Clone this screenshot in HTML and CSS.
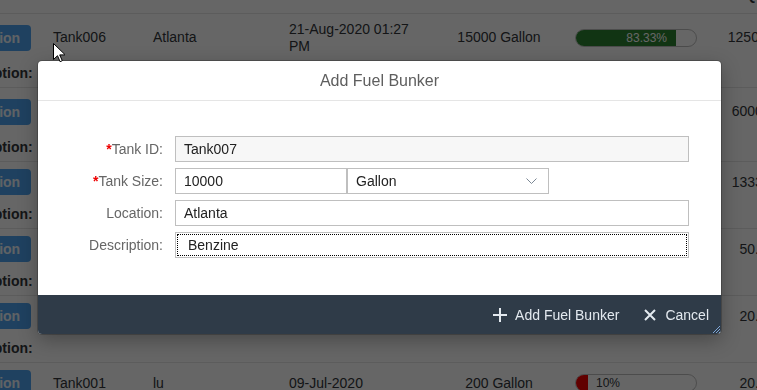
FILE: index.html
```html
<!DOCTYPE html>
<html lang="en">
<head>
<meta charset="UTF-8">
<title>Fuel Bunkers</title>
<link rel="stylesheet" href="styles.css">
</head>
<body>

<!-- tank list (behind the dialog) -->
<div class="table">
  <div class="thead">
    <div></div><div>Tank ID</div><div>Location</div><div>Created On</div>
    <div class="qty">Volume</div><div>Fill Level</div><div class="num">Qty</div>
  </div>

  <div class="trow">
    <div class="cells">
      <div><button class="act">Location</button></div>
      <div>Tank006</div>
      <div>Atlanta</div>
      <div>21-Aug-2020 01:27 PM</div>
      <div class="qty">15000 Gallon</div>
      <div class="prog"><div class="bar"><div class="fill ok" style="width:83.33%">83.33%</div></div></div>
      <div class="num">12500.00</div>
    </div>
    <div class="popin"><b>Description:</b></div>
  </div>

  <div class="trow">
    <div class="cells">
      <div><button class="act">Location</button></div>
      <div>Tank005</div>
      <div>Atlanta</div>
      <div>20-Aug-2020 11:05 AM</div>
      <div class="qty">8000 Gallon</div>
      <div class="prog"><div class="bar"><div class="fill ok" style="width:75%">75%</div></div></div>
      <div class="num">6000.00</div>
    </div>
    <div class="popin"><b>Description:</b></div>
  </div>

  <div class="trow">
    <div class="cells">
      <div><button class="act">Location</button></div>
      <div>Tank004</div>
      <div>Boston</div>
      <div>14-Jul-2020</div>
      <div class="qty">4000 Gallon</div>
      <div class="prog"><div class="bar"><div class="fill warn" style="width:33.33%"></div><span>33.33%</span></div></div>
      <div class="num">1333.33</div>
    </div>
    <div class="popin"><b>Description:</b></div>
  </div>

  <div class="trow">
    <div class="cells">
      <div><button class="act">Location</button></div>
      <div>Tank003</div>
      <div>Denver</div>
      <div>12-Jul-2020</div>
      <div class="qty">100 Gallon</div>
      <div class="prog"><div class="bar"><div class="fill ok" style="width:50%">50%</div></div></div>
      <div class="num">50.00</div>
    </div>
    <div class="popin"><b>Description:</b></div>
  </div>

  <div class="trow">
    <div class="cells">
      <div><button class="act">Location</button></div>
      <div>Tank002</div>
      <div>lu</div>
      <div>10-Jul-2020</div>
      <div class="qty">200 Gallon</div>
      <div class="prog"><div class="bar"><div class="fill bad" style="width:10%"></div><span>10%</span></div></div>
      <div class="num">20.00</div>
    </div>
    <div class="popin"><b>Description:</b></div>
  </div>

  <div class="trow">
    <div class="cells">
      <div><button class="act">Location</button></div>
      <div>Tank001</div>
      <div>lu</div>
      <div>09-Jul-2020</div>
      <div class="qty">200 Gallon</div>
      <div class="prog"><div class="bar"><div class="fill bad" style="width:10%"></div><span>10%</span></div></div>
      <div class="num">20.00</div>
    </div>
    <div class="popin"><b>Description:</b></div>
  </div>
</div>

<div class="overlay"></div>

<!-- Add Fuel Bunker dialog -->
<div class="dialog">
  <div class="dlg-head">Add Fuel Bunker</div>

  <form class="form">
    <label><span class="req">*</span>Tank ID:</label>
    <input class="inp ro" value="Tank007" readonly>

    <label><span class="req">*</span>Tank Size:</label>
    <div class="pair">
      <input class="inp size" value="10000">
      <div class="sel">
        <span>Gallon</span>
        <svg width="11" height="6" viewBox="0 0 11 6"><path d="M.5.5l5 5 5-5" fill="none" stroke="#7b8794" stroke-width="1"/></svg>
      </div>
    </div>

    <label>Location:</label>
    <input class="inp" value="Atlanta">

    <label>Description:</label>
    <input class="inp focus" value="Benzine">
  </form>

  <div class="dlg-foot">
    <button type="button" class="fbtn">
      <svg width="14" height="14" viewBox="0 0 14 14"><path d="M7 0v14M0 7h14" stroke="currentColor" stroke-width="2"/></svg>
      Add Fuel Bunker
    </button>
    <button type="button" class="fbtn x">
      <svg width="12" height="12" viewBox="0 0 12 12"><path d="M1 1l10 10M11 1L1 11" stroke="currentColor" stroke-width="2"/></svg>
      Cancel
    </button>
    <svg class="grip" width="8" height="8" viewBox="0 0 8 8"><path d="M8 1L1 8M8 4L4 8M8 7L7 8" stroke="#7fa6d6" stroke-width="1"/></svg>
  </div>
</div>

<svg class="cursor" width="12" height="20" viewBox="0 0 12 20"><path d="M.5.5v16l4-3.8 2.6 6 2.2-1-2.6-5.8h5.6z" fill="#fff" stroke="#000" stroke-width="1"/></svg>

</body>
</html>
```

FILE: styles.css
```css
html,body{margin:0;height:100%;overflow:hidden;}
body{font-family:"Liberation Sans",Arial,sans-serif;font-size:14px;color:#32363a;background:#fff;position:relative;}

/* table behind */
.table{margin:-30px 0 0 -61px;width:868px;}
.thead,.cells{display:grid;grid-template-columns:102px 100px 136px 145px 142px 143px 100px;}
.thead{height:43px;border-bottom:1px solid #e5e5e5;align-items:end;font-weight:bold;line-height:17px;}
.thead>div{padding:0 12px 9px;}
.trow{padding:7px 0 5px;border-bottom:1px solid #e5e5e5;}
.cells{align-items:center;line-height:16.5px;min-height:26px;}
.cells>div{padding:0 12px;}
.thead .qty,.cells .qty{padding-right:0;text-align:center;}
.cells .prog{padding:0 0 0 11px;}
.thead .num,.cells .num{padding-left:0;padding-right:0;text-align:center;}
.popin{margin-top:10px;padding-left:12px;line-height:18px;}
.act{width:80px;height:26px;border:0;border-radius:4px;background:#4fa3f0;color:#eef5fc;font:bold 14px "Liberation Sans",Arial,sans-serif;padding:0;}

.bar{width:120px;height:16px;border:1px solid #bfbfbf;border-radius:9px;overflow:hidden;display:flex;font-size:12px;line-height:16px;background:#fff;}
.fill{box-sizing:border-box;height:100%;text-align:right;padding-right:9px;color:#fff;}
.fill.ok{background:#2b8230;}
.fill.warn{background:#e78c07;}
.fill.bad{background:#f20000;}
.bar span{padding-left:8px;color:#32363a;}

.overlay{position:fixed;inset:0;background:rgba(0,0,0,.6);}

/* dialog */
.dialog{position:absolute;left:38px;top:61px;width:683px;background:#fff;border-radius:4px;overflow:hidden;box-shadow:0 0 0 1px rgba(0,0,0,.2),0 6px 20px rgba(0,0,0,.3);}
.dlg-head{height:39px;border-bottom:1px solid #e5e5e5;display:flex;align-items:center;justify-content:center;font-size:16px;color:#5e5e5e;}
.form{display:grid;grid-template-columns:125px 1fr;column-gap:12px;row-gap:6px;align-items:center;padding:35px 32px 37px 0;margin:0;}
.form label{text-align:right;color:#666;}
.req{color:#e00;font-weight:bold;}
.inp{box-sizing:border-box;width:100%;height:26px;border:1px solid #bfbfbf;padding:0 8px;font:14px "Liberation Sans",Arial,sans-serif;color:#222;background:#fff;margin:0;}
.inp.ro{background:#f7f7f7;}
.inp.focus{outline:1px dotted #000;outline-offset:-3px;padding-left:12px;}
.pair{display:flex;}
.inp.size{width:172px;}
.sel{box-sizing:border-box;width:202px;height:26px;border:1px solid #bfbfbf;display:flex;align-items:center;justify-content:space-between;padding:0 11px 0 8px;color:#222;}

.dlg-foot{position:relative;height:39px;background:#2f3b48;display:flex;justify-content:flex-end;align-items:center;gap:25px;padding-right:12px;}
.fbtn{display:flex;align-items:center;gap:8px;background:none;border:0;padding:0;color:#e3e9ef;font:14px "Liberation Sans",Arial,sans-serif;cursor:pointer;}
.fbtn.x{gap:9px;}
.grip{position:absolute;right:1px;bottom:1px;}

.cursor{position:absolute;left:53px;top:43px;z-index:10;}
```
